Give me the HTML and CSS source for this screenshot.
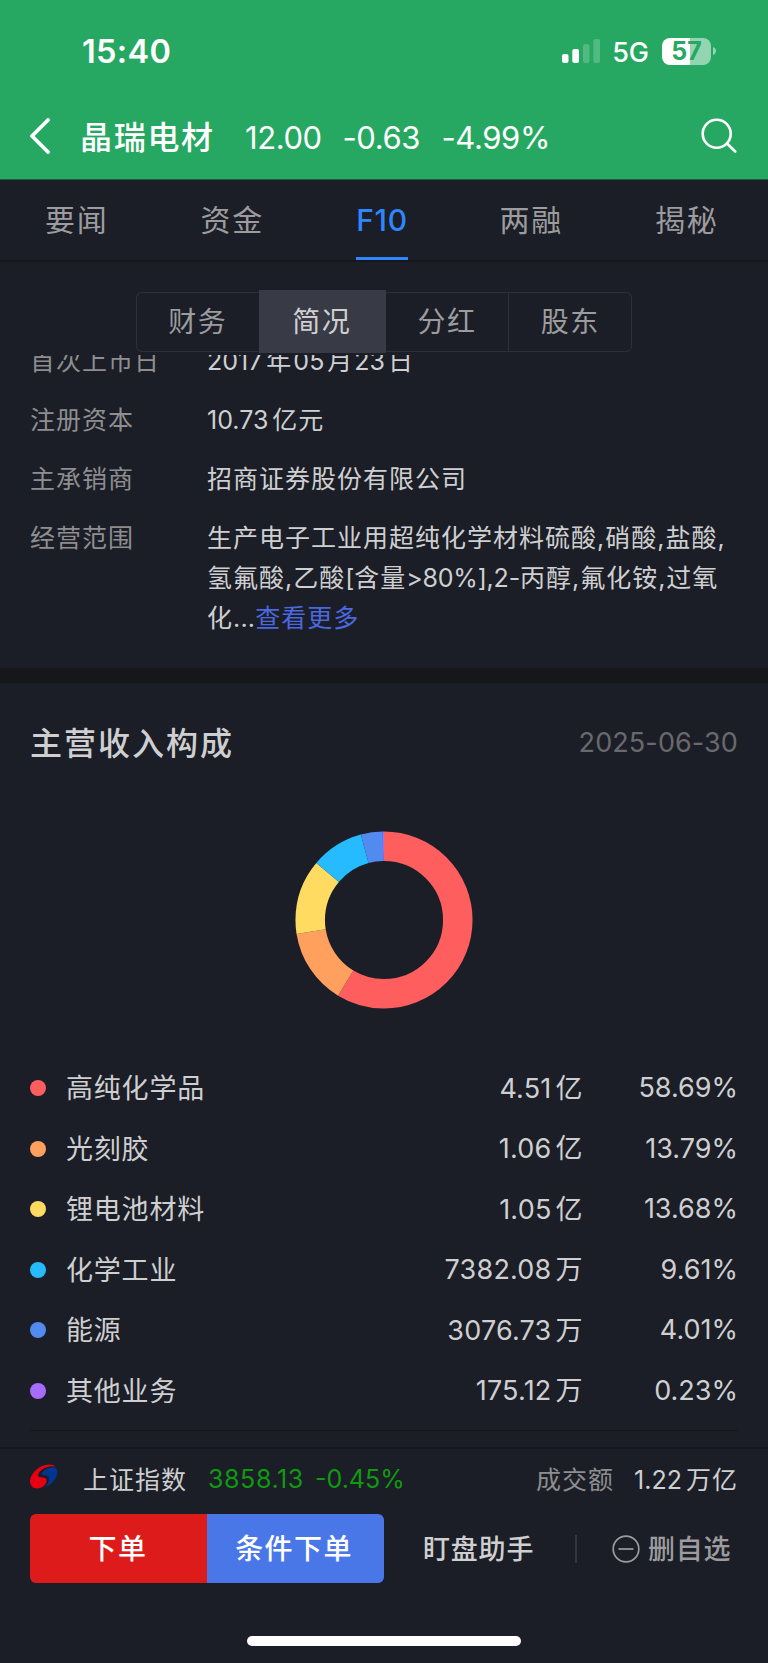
FILE: index.html
```html
<!DOCTYPE html>
<html lang="zh-CN">
<head>
    <meta charset="UTF-8">
    <meta name="viewport" content="width=device-width, initial-scale=1.0">
    <title>晶瑞电材 - F10 简况</title>
    <link rel="stylesheet" href="styles.css">
</head>
<body>
    <header class="top">
        <div class="status-bar">
            <span class="time">15:40</span>
            <div class="status-icons">
                <svg class="signal" width="38" height="24" viewBox="0 0 38 24" fill="#fff">
                    <rect x="0" y="15" width="6.5" height="9" rx="2"/>
                    <rect x="10.3" y="10" width="6.7" height="14" rx="2"/>
                    <rect x="21" y="5" width="6.5" height="19" rx="2" opacity="0.2"/>
                    <rect x="31.3" y="0" width="6.7" height="24" rx="2" opacity="0.2"/>
                </svg>
                <span class="network">5G</span>
                <div class="battery"><span>57</span></div>
                <svg class="battery-cap" width="3" height="8" viewBox="0 0 3 8"><path d="M0 0Q3 1.2 3 4Q3 6.8 0 8Z" fill="#fff" opacity="0.5"/></svg>
            </div>
        </div>
        <div class="title-bar">
            <svg class="back" width="20" height="36" viewBox="0 0 20 36" fill="none" stroke="#fff" stroke-width="3.8" stroke-linecap="round" stroke-linejoin="round"><path d="M18 2L2 18L18 34"/></svg>
            <h1 class="stock-name">晶瑞电材</h1>
            <span class="quote price">12.00</span>
            <span class="quote change">-0.63</span>
            <span class="quote percent">-4.99%</span>
            <svg class="search" width="36" height="36" viewBox="0 0 36 36" fill="none" stroke="#fff" stroke-width="2.6" stroke-linecap="round"><circle cx="15.7" cy="15.7" r="14"/><path d="M26 25.5L34.2 33.5"/></svg>
        </div>
    </header>

    <nav class="tabs">
        <a class="tab">要闻</a>
        <a class="tab">资金</a>
        <a class="tab active">F10</a>
        <a class="tab">两融</a>
        <a class="tab">揭秘</a>
    </nav>

    <div class="segment-wrap">
        <div class="segment">
            <a class="segment-item">财务</a>
            <a class="segment-item active">简况</a>
            <a class="segment-item">分红</a>
            <a class="segment-item">股东</a>
        </div>
    </div>

    <section class="info">
        <dl class="info-row">
            <dt>首次上市日</dt>
            <dd><span class="num">2017</span>年<span class="num">05</span>月<span class="num">23</span>日</dd>
        </dl>
        <dl class="info-row">
            <dt>注册资本</dt>
            <dd><span class="num">10.73</span>亿元</dd>
        </dl>
        <dl class="info-row">
            <dt>主承销商</dt>
            <dd>招商证券股份有限公司</dd>
        </dl>
        <dl class="info-row scope">
            <dt>经营范围</dt>
            <dd>生产电子工业用超纯化学材料硫酸,硝酸,盐酸,<br>氢氟酸,乙酸<span class="latin">[</span>含量<span class="latin">&gt;80%],2-</span>丙醇,氟化铵,过氧<br>化<span class="dots">...</span><a class="more">查看更多</a></dd>
        </dl>
    </section>

    <section class="income">
        <div class="income-head">
            <h2>主营收入构成</h2>
            <span class="date">2025-06-30</span>
        </div>
        <div class="chart">
            <!-- pathLength=100, each arc is its share of income -->
            <svg width="178" height="178" viewBox="0 0 178 178" fill="none" stroke-width="29.5">
                <g transform="rotate(-90 89 89)">
                    <circle cx="89" cy="89" r="73.8" pathLength="100" stroke="#ff5e5e" stroke-dasharray="58.69 41.31"/>
                    <circle cx="89" cy="89" r="73.8" pathLength="100" stroke="#ffa05e" stroke-dasharray="13.79 86.21" stroke-dashoffset="-58.69"/>
                    <circle cx="89" cy="89" r="73.8" pathLength="100" stroke="#ffdc61" stroke-dasharray="13.68 86.32" stroke-dashoffset="-72.48"/>
                    <circle cx="89" cy="89" r="73.8" pathLength="100" stroke="#26baff" stroke-dasharray="9.61 90.39" stroke-dashoffset="-86.16"/>
                    <circle cx="89" cy="89" r="73.8" pathLength="100" stroke="#528bef" stroke-dasharray="4.01 95.99" stroke-dashoffset="-95.77"/>
                    <circle cx="89" cy="89" r="73.8" pathLength="100" stroke="#a76bff" stroke-dasharray="0.22 99.78" stroke-dashoffset="-99.78"/>
                </g>
            </svg>
        </div>
        <ul class="legend">
            <li><i class="dot red"></i><span class="name">高纯化学品</span><span class="amount"><b>4.51</b>亿</span><span class="share">58.69%</span></li>
            <li><i class="dot orange"></i><span class="name">光刻胶</span><span class="amount"><b>1.06</b>亿</span><span class="share">13.79%</span></li>
            <li><i class="dot yellow"></i><span class="name">锂电池材料</span><span class="amount"><b>1.05</b>亿</span><span class="share">13.68%</span></li>
            <li><i class="dot cyan"></i><span class="name">化学工业</span><span class="amount"><b>7382.08</b>万</span><span class="share">9.61%</span></li>
            <li><i class="dot blue"></i><span class="name">能源</span><span class="amount"><b>3076.73</b>万</span><span class="share">4.01%</span></li>
            <li><i class="dot purple"></i><span class="name">其他业务</span><span class="amount"><b>175.12</b>万</span><span class="share">0.23%</span></li>
        </ul>
    </section>

    <footer class="bottom">
        <div class="index-bar">
            <svg class="logo" width="28" height="25" viewBox="0 0 28 25">
                <path d="M26 2.8C23 -0.2 17 -0.4 11 2.6C4 6.2 0 12.5 0 17.5C0 21.7 3 24.5 7 24.5C12.5 24.5 16.5 20.5 16.5 16.5C16.5 14.5 15 13.3 12.5 13.4C9.5 13.6 7.6 12.6 8.3 10.3C10 5.6 18 0.9 26 2.8Z" fill="#e60012"/>
                <path d="M25.5 3.7C21 2.1 13.5 5.5 12.3 9.3C12 10.7 12.8 11.4 14.6 11.2C17.8 11 19.5 12.800 19 15.8C18.500 18.500 17.300 20.700 15.500 23C21.500 21 27.500 14 27.500 8C27.500 6 27 4.500 25.500 3.700Z" fill="#003591"/>
            </svg>
            <span class="index-name">上证指数</span>
            <span class="index-value">3858.13</span>
            <span class="index-change">-0.45%</span>
            <span class="turnover-label">成交额</span>
            <span class="turnover"><b>1.22</b>万亿</span>
        </div>
        <div class="actions">
            <button class="btn order">下单</button>
            <button class="btn condition">条件下单</button>
            <a class="assistant">盯盘助手</a>
            <span class="line"></span>
            <a class="remove">
                <svg width="28" height="28" viewBox="0 0 28 28" fill="none" stroke="#9c9c9f" stroke-width="1.7"><circle cx="14" cy="14" r="12.8"/><path d="M6.5 14H21.5"/></svg>
                <span>删自选</span>
            </a>
        </div>
        <div class="home-indicator"></div>
    </footer>
</body>
</html>
```

FILE: styles.css
```css
* {
    box-sizing: border-box;
    margin: 0;
    padding: 0;
}
body {
    width: 768px;
    height: 1663px;
    overflow: hidden;
    background: #1b1e26;
    color: #cfcfd1;
    font-family: Inter, 'Noto Sans CJK SC', sans-serif;
    font-size: 25px;
    display: flex;
    flex-direction: column;
}
b {
    font-weight: 400;
}

/* header */
.top {
    height: 180px;
    background: #26a862;
    border-bottom: 1px solid #1c5c3e;
    color: #fff;
    flex-shrink: 0;
}
.status-bar {
    height: 102px;
    padding: 0 52px 0 82px;
    display: flex;
    align-items: center;
    justify-content: space-between;
}
.time {
    font-size: 32.5px;
    font-weight: 600;
    letter-spacing: 0.3px;
    padding-top: 1px;
}
.status-icons {
    display: flex;
    align-items: center;
}
.network {
    font-size: 27px;
    font-weight: 500;
    margin: 2px 13px 0 12px;
}
.battery {
    width: 49px;
    height: 27px;
    border-radius: 8px;
    background: linear-gradient(90deg, #fff 28px, #93d4b1 28px);
    color: #26a862;
    font-size: 25px;
    font-weight: 700;
    line-height: 27px;
    text-align: center;
}
.battery-cap {
    margin-left: 2px;
}
.title-bar {
    height: 68px;
    padding: 0 31px 0 30px;
    display: flex;
    align-items: center;
}
.stock-name {
    font-size: 32px;
    font-weight: 500;
    letter-spacing: 1.7px;
    margin-left: 30px;
    padding-bottom: 3px;
    width: 165px;
}
.quote {
    font-size: 31px;
    letter-spacing: -0.4px;
    padding-top: 3px;
}
.price {
    width: 97.5px;
}
.change {
    width: 99px;
}
.search {
    margin-left: auto;
}

/* tabs */
.tabs {
    height: 82px;
    border-bottom: 2px solid #16181d;
    display: flex;
    padding-left: 45px;
    gap: 91.5px;
    flex-shrink: 0;
}
.tab {
    width: 64px;
    height: 80px;
    line-height: 81px;
    font-size: 30px;
    letter-spacing: 1.8px;
    color: #9c9c9f;
    white-space: nowrap;
}
.tab.active {
    width: 52px;
    color: #2f86ff;
    font-weight: 500;
    letter-spacing: 0.6px;
    text-align: center;
    border-bottom: 3px solid #2f86ff;
}

/* sub tabs */
.segment-wrap {
    height: 93px;
    padding-top: 28px;
    display: flex;
    justify-content: center;
    flex-shrink: 0;
}
.segment {
    width: 497px;
    height: 63px;
    display: flex;
    align-items: center;
}
.segment-item {
    flex: 1;
    height: 60px;
    line-height: 58px;
    border: 1px solid #2e3039;
    border-left-width: 0;
    text-align: center;
    font-size: 28px;
    letter-spacing: 1.5px;
    color: #9c9c9f;
}
.segment-item:first-child {
    border-left-width: 1px;
    border-right-width: 0;
    border-radius: 6px 0 0 6px;
}
.segment-item:last-child {
    border-radius: 0 6px 6px 0;
}
.segment-item.active {
    flex: 0 0 127px;
    height: 63px;
    line-height: 62px;
    background: #383a45;
    border-color: #383a45;
    color: #cfcfd1;
}

/* company info, scrolled under the sub tabs */
.info {
    height: 313px;
    overflow: hidden;
    padding: 0 30px;
    flex-shrink: 0;
}
.info-row {
    display: flex;
    height: 59px;
    line-height: 40px;
    letter-spacing: 1px;
}
.info-row:first-child {
    margin-top: -14px;
}
.info-row dt {
    width: 177px;
    color: #8e8e91;
}
.info-row dd {
    white-space: nowrap;
}
.num {
    letter-spacing: 0;
    margin: 0 3px 0 1px;
}
.num:first-child {
    margin: 0 4px 0 0;
}
.latin {
    letter-spacing: -0.2px;
}
.dots {
    letter-spacing: 0.2px;
}
.more {
    color: #4a68e0;
}

/* income */
.income {
    border-top: 15px solid #16171b;
    padding: 0 30px;
    height: 779px;
    flex-shrink: 0;
}
.income-head {
    height: 119px;
    display: flex;
    align-items: center;
    justify-content: space-between;
}
.income-head h2 {
    font-size: 32px;
    font-weight: 500;
    letter-spacing: 2px;
    padding-bottom: 4px;
}
.date {
    font-size: 27px;
    letter-spacing: 0.1px;
    color: #69696d;
}
.chart {
    display: flex;
    justify-content: center;
    padding-top: 29px;
    height: 256px;
}
.legend {
    list-style: none;
    height: 373px;
    border-bottom: 1px solid #16171b;
}
.legend li {
    height: 60.5px;
    display: flex;
    align-items: center;
    font-size: 27px;
}
.dot {
    width: 16px;
    height: 16px;
    border-radius: 50%;
    margin-right: 20px;
}
.dot.red { background: #ff5e5e; }
.dot.orange { background: #ffa05e; }
.dot.yellow { background: #ffdc61; }
.dot.cyan { background: #26baff; }
.dot.blue { background: #528bef; }
.dot.purple { background: #a76bff; }
.name {
    flex: 1;
    letter-spacing: 0.8px;
    padding-bottom: 3px;
}
.amount {
    padding-bottom: 4px;
}
.amount b {
    margin-right: 4px;
    letter-spacing: 0.2px;
}
.share {
    width: 155.5px;
    padding-bottom: 1px;
    text-align: right;
}

/* footer */
.bottom {
    flex: 1;
    border-top: 2px solid #16181d;
}
.index-bar {
    height: 65px;
    padding: 0 30px 6px;
    display: flex;
    align-items: center;
    white-space: nowrap;
}
.logo {
    margin: -4px 25px 0 0;
}
.index-name {
    width: 125px;
    letter-spacing: 1px;
    padding-bottom: 2px;
}
.index-value,
.index-change {
    color: #109a10;
    padding-top: 1px;
}
.index-value {
    width: 107px;
    letter-spacing: 0.6px;
}
.turnover-label {
    margin-left: auto;
    margin-right: 20px;
    color: #8e8e91;
    letter-spacing: 1px;
    padding-bottom: 2px;
}
.turnover {
    letter-spacing: 1px;
    padding-bottom: 2px;
}
.turnover b {
    margin-right: 4px;
    letter-spacing: 0;
}
.actions {
    height: 69px;
    padding-left: 30px;
    display: flex;
    align-items: center;
}
.btn {
    width: 177px;
    height: 69px;
    padding: 0 1px 3px 0;
    border: none;
    color: #fff;
    font-family: inherit;
    font-size: 28px;
    font-weight: 500;
    letter-spacing: 1.4px;
}
.order {
    background: #dc1b1a;
    border-radius: 6px 0 0 6px;
}
.condition {
    background: #4a77e8;
    border-radius: 0 6px 6px 0;
    padding-right: 3px;
}
.assistant {
    margin-left: 39px;
    padding-bottom: 3px;
    width: 152px;
    font-size: 27px;
    font-weight: 500;
    letter-spacing: 0.8px;
}
.line {
    width: 2px;
    height: 28px;
    background: #363841;
}
.remove {
    display: flex;
    align-items: center;
    gap: 8px;
    margin-left: 35px;
    color: #9c9c9f;
    font-size: 27px;
    font-weight: 500;
    letter-spacing: 0.8px;
}
.remove span {
    padding-bottom: 3px;
}
.home-indicator {
    width: 274px;
    height: 10px;
    border-radius: 5px;
    background: #fff;
    margin: 53px auto 0;
}
```
